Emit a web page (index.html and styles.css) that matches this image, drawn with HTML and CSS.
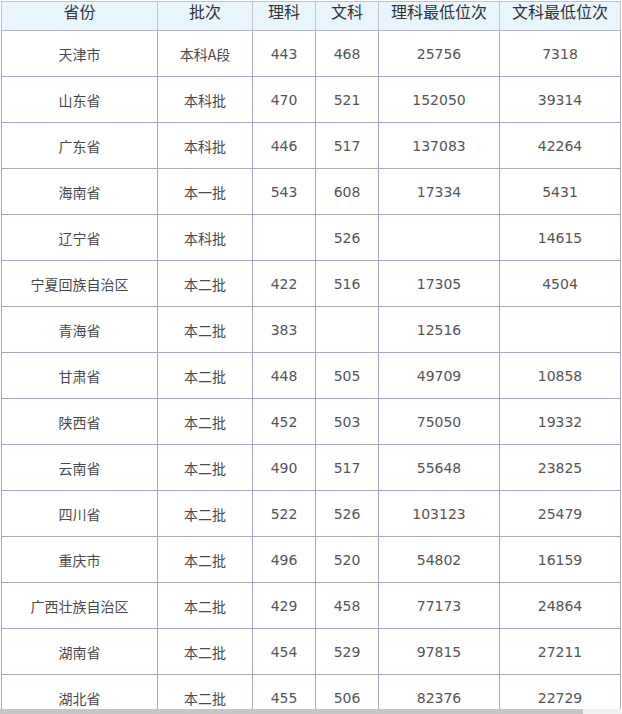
FILE: index.html
```html
<!DOCTYPE html>
<html lang="zh-CN">
<head>
<meta charset="utf-8">
<title>录取分数</title>
<link rel="stylesheet" href="styles.css">
</head>
<body>
<div class="page">
  <div class="viewport">
    <table class="scores">
      <colgroup>
        <col class="c-prov"><col class="c-batch"><col class="c-num"><col class="c-num"><col class="c-rank"><col class="c-rank">
      </colgroup>
      <thead>
        <tr><th>省份</th><th>批次</th><th>理科</th><th>文科</th><th>理科最低位次</th><th>文科最低位次</th></tr>
      </thead>
      <tbody>
        <tr><td class="cjk">天津市</td><td class="cjk">本科A段</td><td>443</td><td>468</td><td>25756</td><td>7318</td></tr>
        <tr><td class="cjk">山东省</td><td class="cjk">本科批</td><td>470</td><td>521</td><td>152050</td><td>39314</td></tr>
        <tr><td class="cjk">广东省</td><td class="cjk">本科批</td><td>446</td><td>517</td><td>137083</td><td>42264</td></tr>
        <tr><td class="cjk">海南省</td><td class="cjk">本一批</td><td>543</td><td>608</td><td>17334</td><td>5431</td></tr>
        <tr><td class="cjk">辽宁省</td><td class="cjk">本科批</td><td></td><td>526</td><td></td><td>14615</td></tr>
        <tr><td class="cjk">宁夏回族自治区</td><td class="cjk">本二批</td><td>422</td><td>516</td><td>17305</td><td>4504</td></tr>
        <tr><td class="cjk">青海省</td><td class="cjk">本二批</td><td>383</td><td></td><td>12516</td><td></td></tr>
        <tr><td class="cjk">甘肃省</td><td class="cjk">本二批</td><td>448</td><td>505</td><td>49709</td><td>10858</td></tr>
        <tr><td class="cjk">陕西省</td><td class="cjk">本二批</td><td>452</td><td>503</td><td>75050</td><td>19332</td></tr>
        <tr><td class="cjk">云南省</td><td class="cjk">本二批</td><td>490</td><td>517</td><td>55648</td><td>23825</td></tr>
        <tr><td class="cjk">四川省</td><td class="cjk">本二批</td><td>522</td><td>526</td><td>103123</td><td>25479</td></tr>
        <tr><td class="cjk">重庆市</td><td class="cjk">本二批</td><td>496</td><td>520</td><td>54802</td><td>16159</td></tr>
        <tr><td class="cjk">广西壮族自治区</td><td class="cjk">本二批</td><td>429</td><td>458</td><td>77173</td><td>24864</td></tr>
        <tr><td class="cjk">湖南省</td><td class="cjk">本二批</td><td>454</td><td>529</td><td>97815</td><td>27211</td></tr>
        <tr><td class="cjk">湖北省</td><td class="cjk">本二批</td><td>455</td><td>506</td><td>82376</td><td>22729</td></tr>
      </tbody>
    </table>
  </div>
  <div class="hscroll"><div class="thumb"></div></div>
</div>
</body>
</html>
```

FILE: styles.css
```css
html, body {
  margin: 0;
  padding: 0;
  background: #ffffff;
}
.page {
  width: 622px;
  height: 714px;
  overflow: hidden;
  display: flex;
  flex-direction: column;
}
.viewport {
  height: 709px;
  overflow: hidden;
  padding: 1px 0 0 1px;
  box-sizing: border-box;
}
.scores {
  border-collapse: collapse;
  table-layout: fixed;
  width: 620px;
  font-family: "DejaVu Sans", "Noto Sans CJK SC", sans-serif;
  color: #555555;
}
.c-prov { width: 156px; }
.c-batch { width: 95px; }
.c-num { width: 63px; }
.c-rank { width: 121px; }
.scores th {
  background: #e9f5fd;
  border: 1px solid #c3c3c8;
  height: 18px;
  padding: 0 0 10px 0;
  font-family: "Noto Sans CJK SC", sans-serif;
  font-weight: normal;
  font-size: 16px;
  line-height: 18px;
  color: #333333;
  text-align: center;
  vertical-align: middle;
}
.scores td {
  border: 1px solid #aaa3d0;
  height: 45px;
  padding: 0;
  font-size: 14px;
  line-height: 18px;
  text-align: center;
  vertical-align: middle;
}
.scores thead th {
  border-bottom-color: #b9b6cc;
}
.scores td.cjk {
  font-family: "Noto Sans CJK SC", sans-serif;
  font-size: 14px;
  color: #4a4a4a;
}
.hscroll {
  flex: 1;
  background: #f0f0f0;
}
.thumb {
  width: 583px;
  height: 100%;
  background: #c6c6c6;
}
```
